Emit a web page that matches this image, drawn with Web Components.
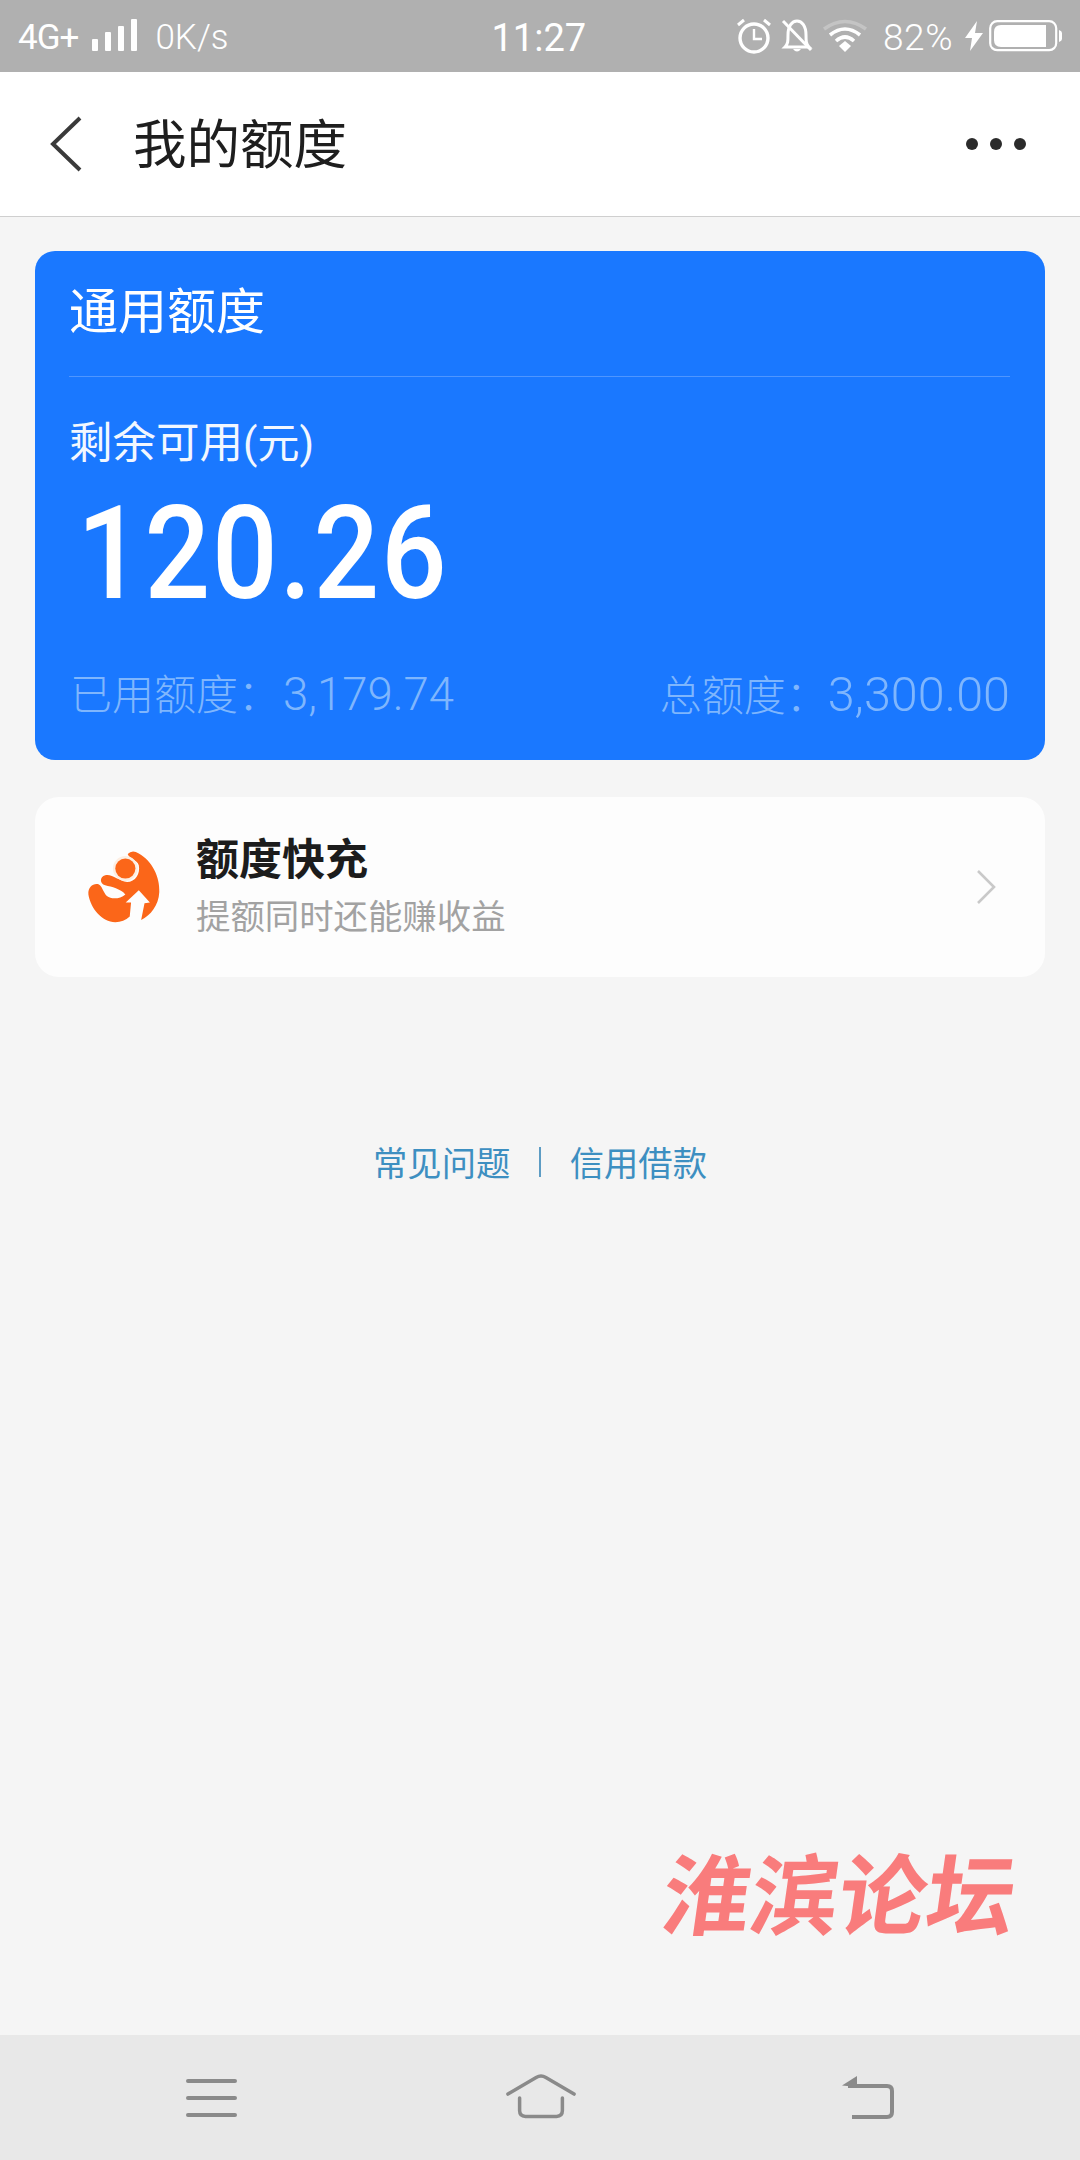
<!DOCTYPE html>
<html lang="zh">
<head>
<meta charset="utf-8">
<title>我的额度</title>
<style>
  html, body { margin: 0; padding: 0; }
  body { font-family: Roboto, "Noto Sans CJK SC", sans-serif; background: #f5f5f5; }
</style>
</head>
<body>
<quota-page>
  <status-bar></status-bar>
  <nav-bar>我的额度</nav-bar>
  <quota-card used="3,179.74" total="3,300.00" left="120.26"></quota-card>
  <charge-row title="额度快充" sub="提额同时还能赚收益"></charge-row>
  <help-links></help-links>
  <bottom-bar></bottom-bar>
</quota-page>

<script>
const FONT = 'Roboto, "Noto Sans CJK SC", sans-serif';

class quotaPage extends HTMLElement {
  connectedCallback() {
    this.attachShadow({ mode: "open" }).innerHTML = /* html */ `
      <style>
        :host {
          display: flex;
          flex-direction: column;
          position: relative;
          height: 2160px;
          overflow: hidden;
          background: #f5f5f5;
          font-family: ${FONT};
        }
        .mark {
          position: absolute;
          left: 664px;
          top: 1838px;
          width: 360px;
          font-family: "Noto Sans CJK SC", sans-serif;
          font-size: 88px;
          line-height: 104px;
          font-weight: 700;
          white-space: nowrap;
          color: #f97c7c;
          transform: skewX(-8deg);
        }
      </style>
      <slot></slot>
      <div class="mark">淮滨论坛</div>`;
  }
}

class statusBar extends HTMLElement {
  connectedCallback() {
    this.attachShadow({ mode: "open" }).innerHTML = /* html */ `
      <style>
        :host {
          display: flex;
          align-items: center;
          height: 72px;
          padding: 0 17px 0 18px;
          box-sizing: border-box;
          background: #b0b0b0;
          color: #fff;
          font-size: 35px;
          flex: none;
        }
        svg { display: block; flex: none; }
        .left, .right { display: flex; align-items: center; flex: 1; }
        .right { justify-content: flex-end; }
        .clock { font-size: 38px; width: 94px; text-align: center; margin: 3px 2px 0 -2px; }
        .net { font-size: 35px; letter-spacing: -1px; margin-top: 3px; }
        .speed { margin: 3px 0 0 17px; font-weight: 300; }
        .pct { font-size: 37px; letter-spacing: .5px; font-weight: 300; margin: 3px 12px 0 16px; }
      </style>
      <div class="left">
        <span class="net">4G+</span>
        <svg width="46" height="34" viewBox="0 0 46 34" style="margin:0 0 0 14px" fill="#fff">
          <rect x="0" y="20" width="6" height="12" rx="1"/>
          <rect x="13" y="13" width="6" height="19" rx="1"/>
          <rect x="26" y="7" width="6" height="25" rx="1"/>
          <rect x="39" y="0" width="6" height="32" rx="1"/>
        </svg>
        <span class="speed">0K/s</span>
      </div>
      <div class="clock">11:27</div>
      <div class="right">
        <svg width="36" height="36" viewBox="0 0 36 36" fill="none" stroke="#fff" stroke-width="3.4">
          <circle cx="18" cy="20" r="14"/>
          <path d="M18 11v10h8" stroke-width="2.4"/>
          <path d="M2 7l6-5M34 7l-6-5" stroke-width="3"/>
        </svg>
        <svg width="34" height="36" viewBox="0 0 34 36" fill="none" stroke="#fff" stroke-width="3" style="margin-left:8px">
          <path d="M5 29c3-3 3-6 3-12 0-9 4-14 9-14s9 5 9 14c0 6 0 9 3 12z"/>
          <path d="M13 31q4 5 8 0z" fill="#fff" stroke="none"/>
          <path d="M3 3l28 29"/>
        </svg>
        <svg width="44" height="34" viewBox="0 0 44 34" fill="none" stroke="#fff" stroke-width="3.6" style="margin-left:9px">
          <path d="M1 10Q22-5 43 10" stroke="#c4c4c4"/>
          <path d="M7 16Q22 4 37 16"/>
          <path d="M13 22Q22 14 31 22"/>
          <path d="M16 27l6-5 6 5-6 6z" fill="#fff" stroke="none"/>
        </svg>
        <span class="pct">82%</span>
        <svg width="18" height="30" viewBox="0 0 18 30" fill="#fff"><path d="M12 0L0 17h7l-2 13L18 12h-8z"/></svg>
        <svg width="74" height="32" viewBox="0 0 74 32" style="margin-left:6px">
          <rect x="1.2" y="1.2" width="66" height="29" rx="7" fill="none" stroke="#fff" stroke-width="2.2"/>
          <path d="M12 5h45v22H12q-7 0-7-7v-8q0-7 7-7z" fill="#fff"/>
          <path d="M70 10q3 1 3 3v6q0 2-3 3z" fill="#fff"/>
        </svg>
      </div>`;
  }
}

class navBar extends HTMLElement {
  connectedCallback() {
    this.attachShadow({ mode: "open" }).innerHTML = /* html */ `
      <style>
        :host {
          display: flex;
          align-items: center;
          height: 145px;
          box-sizing: border-box;
          padding: 0 54px 0 49px;
          background: #fff;
          border-bottom: 1px solid #cfcfcf;
          flex: none;
        }
        svg { display: block; flex: none; }
        .title {
          flex: 1;
          margin: -7px 0 0 51px;
          font-size: 53.5px;
          color: #1e1e1e;
        }
        .dots { display: flex; gap: 12px; }
        .dots i { width: 12px; height: 12px; border-radius: 50%; background: #2b2b2b; }
      </style>
      <svg width="33" height="56" viewBox="0 0 33 56" fill="none" stroke="#3a3a3a" stroke-width="4">
        <path d="M31 2L4 28l27 26"/>
      </svg>
      <div class="title"><slot></slot></div>
      <div class="dots"><i></i><i></i><i></i></div>`;
  }
}

class quotaCard extends HTMLElement {
  connectedCallback() {
    this.attachShadow({ mode: "open" }).innerHTML = /* html */ `
      <style>
        :host {
          display: block;
          margin: 34px 35px 0;
          height: 509px;
          padding: 0 35px;
          box-sizing: border-box;
          background: #1a78ff;
          border-radius: 20px;
          color: #fff;
          flex: none;
        }
        .head {
          height: 125px;
          line-height: 123px;
          font-size: 49px;
          margin-left: -1px;
          border-bottom: 1px solid #4f96ff;
        }
        .label { margin: 37px 0 0 -1px; font-size: 43.5px; line-height: 60px; color: #f2f7ff; }
        .label span { font-size: 42px; }
        .left {
          margin: 15px 0 0 7px;
          font-size: 130px;
          line-height: 130px;
          font-weight: 500;
          letter-spacing: 2px;
          transform: scaleX(.89);
          transform-origin: left center;
        }
        .stats {
          display: flex;
          justify-content: space-between;
          margin-top: 46px;
          font-size: 42px;
          line-height: 60px;
          font-weight: 300;
          color: #7fb6fd;
        }
        .stats b { font-weight: 300; }
        .used { font-size: 45.5px; margin-left: 3px; }
        .total { font-size: 48.5px; }
      </style>
      <div class="head">通用额度</div>
      <div class="label">剩余可用<span>(元)</span></div>
      <div class="left">${this.getAttribute("left")}</div>
      <div class="stats">
        <div>已用额度：<b class="used">${this.getAttribute("used")}</b></div>
        <div>总额度：<b class="total">${this.getAttribute("total")}</b></div>
      </div>`;
  }
}

class chargeRow extends HTMLElement {
  connectedCallback() {
    this.attachShadow({ mode: "open" }).innerHTML = /* html */ `
      <style>
        :host {
          display: flex;
          align-items: center;
          margin: 37px 35px 0;
          height: 180px;
          padding: 0 49px 0 45px;
          box-sizing: border-box;
          background: #fdfdfd;
          border-radius: 24px;
          flex: none;
        }
        svg { display: block; flex: none; }
        .text { flex: 1; margin-left: 32px; }
        .title { font-size: 43px; line-height: 56px; font-weight: 700; color: #1c1c1c; }
        .sub { margin-top: 4px; font-size: 34.4px; line-height: 50px; color: #a2a2a2; }
      </style>
      <svg width="84" height="84" viewBox="30 45 250 250">
        <path fill="#fb6619" d="M172 72Q185 58 205 70C245 92 268 140 266 185C264 225 240 255 212 268L222 218L238 216L205 180L166 216L182 216L178 258Q160 275 135 275C95 272 62 235 55 192C53 170 70 158 85 162C95 165 98 185 110 197C125 208 150 205 165 192C150 175 125 170 105 165C88 160 88 140 105 135C125 130 145 152 170 155C195 155 210 130 205 105C200 90 175 85 172 72Z"/>
        <circle cx="165" cy="115" r="37" fill="#fdeee2"/>
        <circle cx="165" cy="115" r="30" fill="#fb6619"/>
      </svg>
      <div class="text">
        <div class="title">${this.getAttribute("title")}</div>
        <div class="sub">${this.getAttribute("sub")}</div>
      </div>
      <svg width="20" height="34" viewBox="0 0 20 34" fill="none" stroke="#c9c9c9" stroke-width="2.6">
        <path d="M2 1l16 16L2 33"/>
      </svg>`;
  }
}

class helpLinks extends HTMLElement {
  connectedCallback() {
    this.attachShadow({ mode: "open" }).innerHTML = /* html */ `
      <style>
        :host {
          display: flex;
          justify-content: center;
          align-items: center;
          gap: 29px;
          margin-top: 159px;
          height: 50px;
          font-size: 34.3px;
          color: #3d8fc1;
          flex: none;
        }
        i { width: 1.5px; height: 30px; background: #5d9cc4; margin-top: 2px; }
      </style>
      <span>常见问题</span><i></i><span>信用借款</span>`;
  }
}

class bottomBar extends HTMLElement {
  connectedCallback() {
    this.attachShadow({ mode: "open" }).innerHTML = /* html */ `
      <style>
        :host {
          display: flex;
          justify-content: space-between;
          align-items: center;
          margin-top: auto;
          height: 125px;
          padding: 0 186px 0 186px;
          box-sizing: border-box;
          background: #e8e8e8;
          flex: none;
        }
        svg { display: block; flex: none; }
        .home { margin: -3px 0 0 2px; }
      </style>
      <svg width="51" height="40" viewBox="0 0 51 40" fill="none" stroke="#8a8a8a" stroke-width="4" stroke-linecap="round">
        <path d="M2 3h47M2 20h47M2 37h47"/>
      </svg>
      <svg class="home" width="70" height="46" viewBox="0 0 72 46" fill="none" stroke="#8a8a8a" stroke-width="3.6" stroke-linecap="round">
        <path d="M2 21L31 4q5-3 10 0l29 17"/>
        <path d="M14 25v13q0 6 6 6h32q6 0 6-6V25"/>
      </svg>
      <svg width="52" height="44" viewBox="0 0 52 44" fill="none" stroke="#8a8a8a" stroke-width="4">
        <path d="M6 10h39q5 0 5 5v21q0 5-5 5H10"/>
        <path d="M0 9.5L15 0v11z" fill="#8a8a8a" stroke="none"/>
      </svg>`;
  }
}

customElements.define("quota-page", quotaPage);
customElements.define("status-bar", statusBar);
customElements.define("nav-bar", navBar);
customElements.define("quota-card", quotaCard);
customElements.define("charge-row", chargeRow);
customElements.define("help-links", helpLinks);
customElements.define("bottom-bar", bottomBar);
</script>
</body>
</html>
